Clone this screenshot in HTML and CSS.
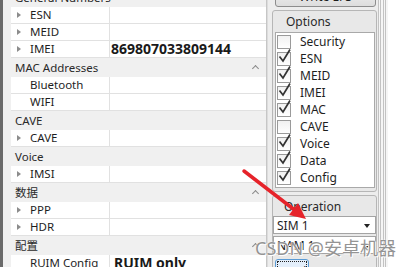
FILE: index.html
```html
<!DOCTYPE html>
<html lang="en">
<head>
    <meta charset="UTF-8">
    <title>EFS Tool</title>
    <link rel="stylesheet" href="styles.css">
</head>
<body>

    <div class="screen">
        <div class="edge"></div>

        <!-- property grid -->
        <div class="grid">
            <div class="cat">General Numbers</div>
            <div class="row"><span class="gut"></span><span class="name"><i class="tri"></i>ESN</span><span class="val"></span></div>
            <div class="row"><span class="gut"></span><span class="name"><i class="tri"></i>MEID</span><span class="val"></span></div>
            <div class="row"><span class="gut"></span><span class="name"><i class="tri"></i>IMEI</span><span class="val">869807033809144</span></div>
            <div class="cat">MAC Addresses<i class="chev"></i></div>
            <div class="row"><span class="gut"></span><span class="name"><i class="tri none"></i>Bluetooth</span><span class="val"></span></div>
            <div class="row"><span class="gut"></span><span class="name"><i class="tri none"></i>WIFI</span><span class="val"></span></div>
            <div class="cat">CAVE</div>
            <div class="row"><span class="gut"></span><span class="name"><i class="tri"></i>CAVE</span><span class="val"></span></div>
            <div class="cat">Voice</div>
            <div class="row"><span class="gut"></span><span class="name"><i class="tri"></i>IMSI</span><span class="val"></span></div>
            <div class="cat">数据<i class="chev"></i></div>
            <div class="row"><span class="gut"></span><span class="name"><i class="tri"></i>PPP</span><span class="val"></span></div>
            <div class="row"><span class="gut"></span><span class="name"><i class="tri"></i>HDR</span><span class="val"></span></div>
            <div class="cat">配置<i class="chev"></i></div>
            <div class="row"><span class="gut"></span><span class="name"><i class="tri none"></i>RUIM Config</span><span class="val ruim">RUIM only</span></div>
        </div>

        <div class="sep"></div>

        <!-- side panel -->
        <div class="side">
            <button class="btn">Write EFS</button>

            <div class="group options">
                <div class="group-title">Options</div>
                <div class="checklist">
                    <div class="item"><span class="box"></span>Security</div>
                    <div class="item"><span class="box on"></span>ESN</div>
                    <div class="item"><span class="box on"></span>MEID</div>
                    <div class="item"><span class="box on"></span>IMEI</div>
                    <div class="item"><span class="box on"></span>MAC</div>
                    <div class="item"><span class="box"></span>CAVE</div>
                    <div class="item"><span class="box on"></span>Voice</div>
                    <div class="item"><span class="box on"></span>Data</div>
                    <div class="item"><span class="box on"></span>Config</div>
                </div>
            </div>

            <div class="group operation">
                <div class="group-title">Operation</div>
                <div class="combo">SIM 1<i class="drop"></i></div>
                <div class="combo">NAM 1<i class="drop"></i></div>
                <button class="btn read"><span>Read</span></button>
            </div>
        </div>

        <div class="stripes"></div>
        <div class="blank"></div>

        <!-- annotation over the screenshot -->
        <svg class="arrow" width="412" height="267" viewBox="0 0 412 267">
            <line x1="244" y1="171" x2="294" y2="209.5" stroke="#e6232a" stroke-width="3.5" stroke-linecap="round"/>
            <polygon points="306,219 289,215 298,203" fill="#e6232a"/>
        </svg>
        <div class="mark">CSDN @安卓机器</div>
    </div>

    <script>
        // 체크박스 표시
        document.querySelectorAll('.box.on').forEach(box => {
            box.innerHTML = '<svg width="15" height="16" viewBox="0 0 15 16"><path d="M2.5 8.5 L6 13 L13 1.5" fill="none" stroke="#333" stroke-width="1.7"/></svg>';
        });
    </script>
</body>
</html>
```

FILE: styles.css
```css
body {
    margin: 0;
    font-family: "Noto Sans", "Noto Sans CJK SC", sans-serif;
    font-size: 11.5px;
    color: #1e1e1e;
    background-color: #fff;
}

.screen {
    position: relative;
    display: flex;
    width: 412px;
    height: 267px;
    overflow: hidden;
}

.edge {
    width: 3px;
    flex-shrink: 0;
    background-color: #6a6a6a;
}

/* property grid */
.grid {
    width: 264px;
    flex-shrink: 0;
    margin-top: -12.3px;
    background-color: #fff;
    border-right: 1px solid #c6c6c6;
    box-sizing: border-box;
}

.cat {
    height: 19px;
    display: flex;
    align-items: center;
    padding-left: 12px;
    background-color: #f0f0f0;
    color: #2a2a2a;
}

.chev {
    margin-left: auto;
    margin-right: 8px;
    width: 4px;
    height: 4px;
    border-left: 1px solid #8a8a8a;
    border-top: 1px solid #8a8a8a;
    transform: rotate(45deg);
    margin-top: 3px;
}

.row {
    height: 17px;
    display: flex;
}

.gut {
    width: 8px;
    flex-shrink: 0;
    background-color: #f0f0f0;
}

.name {
    width: 99px;
    flex-shrink: 0;
    display: flex;
    align-items: center;
    box-sizing: border-box;
    border-bottom: 1px solid #e1e1e1;
    border-right: 1px solid #e1e1e1;
    white-space: nowrap;
    overflow: hidden;
}

.tri {
    width: 0;
    height: 0;
    margin: 0 9px 0 6px;
    border-left: 4px solid #8c8c8c;
    border-top: 3px solid transparent;
    border-bottom: 3px solid transparent;
}

.tri.none {
    border-left-color: transparent;
}

.val {
    flex: 1;
    display: flex;
    align-items: center;
    padding-left: 1px;
    border-bottom: 1px solid #e1e1e1;
    font-size: 14px;
    font-weight: bold;
    color: #1a1a1a;
}

.val.ruim {
    padding-left: 4px;
}

.sep {
    width: 5px;
    flex-shrink: 0;
    background-color: #ededed;
    border-left: 1px solid #dcdcdc;
    box-sizing: border-box;
}

/* side panel */
.side {
    width: 106px;
    flex-shrink: 0;
    margin-top: -15px;
    display: flex;
    flex-direction: column;
    background-color: #ededed;
    overflow: hidden;
}

.side > * {
    flex-shrink: 0;
}

.btn {
    font-family: inherit;
    font-size: 12px;
    color: #1e1e1e;
    height: 22px;
    margin: 0 2px 3px 3px;
    border: 1px solid #8d8d8d;
    border-radius: 3px;
    background: linear-gradient(#f4f4f4, #dddddd);
    padding: 0;
}

.group {
    border: 1px solid #b6b6b6;
    border-radius: 3px;
    background-color: #e8e8e8;
    margin-right: 1px;
}

.group-title {
    height: 21px;
    line-height: 21px;
    padding-left: 11px;
    font-size: 12px;
    color: #2a2a2a;
}

.options {
    height: 182px;
    box-sizing: border-box;
    padding: 0 1px 0 2px;
    margin-bottom: 3px;
}

.checklist {
    height: 156px;
    background-color: #fff;
    border: 1px solid #a9a9a9;
    box-sizing: border-box;
}

.item {
    height: 17px;
    display: flex;
    align-items: center;
    font-size: 12px;
}

.box {
    position: relative;
    width: 12px;
    height: 12px;
    margin: 0 9px 0 1px;
    border: 1px solid #9a9a9a;
    background: linear-gradient(#f1f1f1, #ffffff);
}

.box svg {
    position: absolute;
    left: -1px;
    top: -5px;
}

.operation {
    padding: 0;
}

.operation .group-title {
    height: 20px;
    line-height: 21px;
}

.combo {
    position: relative;
    height: 18px;
    margin-bottom: 2px;
    display: flex;
    align-items: center;
    padding-left: 3px;
    background-color: #fff;
    border: 1px solid #a4a4a4;
    box-sizing: border-box;
    font-size: 12px;
}

.drop {
    position: absolute;
    right: 5px;
    top: 7px;
    border-top: 4px solid #222;
    border-left: 3.5px solid transparent;
    border-right: 3.5px solid transparent;
}

.read {
    margin: 3px 1px 0 2px;
    height: 24px;
    border: 1px solid #5a9bd5;
    background: #e3eefa;
    padding: 1px;
}

.read span {
    display: block;
    height: 100%;
    border: 1px dotted #222;
    box-sizing: border-box;
    line-height: 20px;
}

.stripes {
    width: 10px;
    flex-shrink: 0;
    background: repeating-linear-gradient(90deg, #c2c2c2 0 1px, #f5f5f5 1px 2.4px);
}

.blank {
    flex: 1;
    background-color: #fff;
}

/* overlays */
.arrow {
    position: absolute;
    left: 0;
    top: 0;
    pointer-events: none;
}

.mark {
    position: absolute;
    left: 255px;
    top: 234px;
    font-size: 18px;
    color: #949494;
    white-space: nowrap;
    text-shadow: 0 0 1px #fff, 0 0 1px #fff, 1px 1px 0 #fff;
}
```
